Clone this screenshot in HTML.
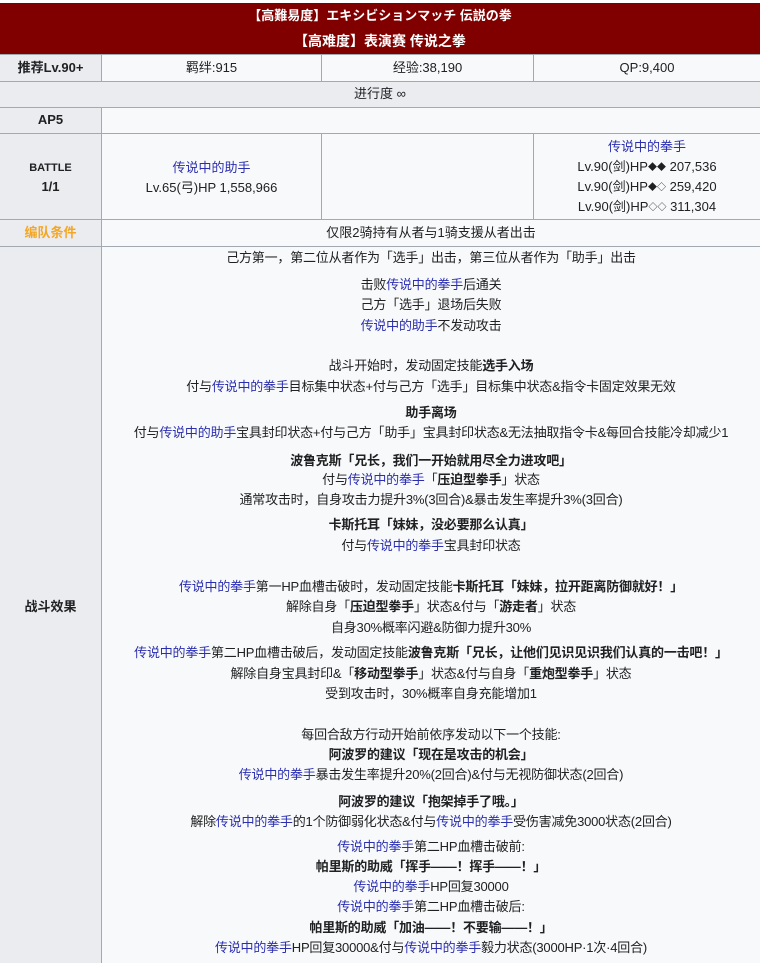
<!DOCTYPE html>
<html><head><meta charset="utf-8"><style>
*{margin:0;padding:0;box-sizing:border-box}
body{width:760px;height:963px;background:#fff;position:relative;overflow:hidden;font-family:"Liberation Sans","Noto Sans CJK SC",sans-serif;font-size:13px;color:#202122}
.bg{position:absolute}
.l{position:absolute;left:102px;width:658px;text-align:center;line-height:20px;height:20px;white-space:nowrap;letter-spacing:-0.2px}
.c{position:absolute;text-align:center;line-height:20px;white-space:nowrap}
b{font-weight:bold}
.u{color:#2b2fae}
.d{font-size:9px;vertical-align:1px}
.hl{position:absolute;background:#a2a9b1}
</style></head><body>
<div class="bg" style="left:0;top:3px;width:760px;height:51px;background:#800000"></div>
<div class="c" style="left:0;top:6px;width:760px;color:#fff;font-weight:bold;font-size:13px">【高難易度】エキシビションマッチ 伝説の拳</div>
<div class="c" style="left:0;top:31px;width:760px;color:#fff;font-weight:bold;font-size:14px">【高难度】表演赛 传说之拳</div>

<div class="bg" style="left:0;top:54px;width:101px;height:909px;background:#eaecf0"></div>
<div class="bg" style="left:102px;top:54px;width:658px;height:909px;background:#f8f9fa"></div>
<div class="bg" style="left:0;top:81px;width:760px;height:26px;background:#eaecf0"></div>

<div class="hl" style="left:0;top:54px;width:760px;height:1px"></div>
<div class="hl" style="left:0;top:81px;width:760px;height:1px"></div>
<div class="hl" style="left:0;top:107px;width:760px;height:1px"></div>
<div class="hl" style="left:0;top:133px;width:760px;height:1px"></div>
<div class="hl" style="left:0;top:219px;width:760px;height:1px"></div>
<div class="hl" style="left:0;top:246px;width:760px;height:1px"></div>
<div class="hl" style="left:101px;top:54px;width:1px;height:27px"></div>
<div class="hl" style="left:101px;top:107px;width:1px;height:856px"></div>
<div class="hl" style="left:321px;top:54px;width:1px;height:27px"></div>
<div class="hl" style="left:533px;top:54px;width:1px;height:27px"></div>
<div class="hl" style="left:321px;top:133px;width:1px;height:86px"></div>
<div class="hl" style="left:533px;top:133px;width:1px;height:86px"></div>

<div class="c" style="left:0;top:58px;width:101px;font-weight:bold">推荐Lv.90+</div>
<div class="c" style="left:102px;top:58px;width:219px">羁绊:915</div>
<div class="c" style="left:322px;top:58px;width:211px">经验:38,190</div>
<div class="c" style="left:534px;top:58px;width:226px">QP:9,400</div>
<div class="c" style="left:0;top:84px;width:760px">进行度 ∞</div>
<div class="c" style="left:0;top:110px;width:101px;font-weight:bold">AP5</div>
<div class="c" style="left:0;top:158px;width:101px;font-weight:bold;font-size:11px">BATTLE</div>
<div class="c" style="left:0;top:177px;width:101px;font-weight:bold">1/1</div>
<div class="c" style="left:102px;top:158px;width:219px"><span class="u">传说中的助手</span><br>Lv.65(弓)HP 1,558,966</div>
<div class="c" style="left:534px;top:137px;width:226px"><span class="u">传说中的拳手</span><br>Lv.90(剑)HP<span class="d">◆◆</span> 207,536<br>Lv.90(剑)HP<span class="d">◆◇</span> 259,420<br>Lv.90(剑)HP<span class="d">◇◇</span> 311,304</div>
<div class="c" style="left:0;top:223px;width:101px;font-weight:bold;color:#f5a623">编队条件</div>
<div class="c" style="left:102px;top:223px;width:658px">仅限2骑持有从者与1骑支援从者出击</div>
<div class="c" style="left:0;top:597px;width:101px;font-weight:bold">战斗效果</div>

<div class="l" style="top:248px">己方第一，第二位从者作为「选手」出击，第三位从者作为「助手」出击</div>
<div class="l" style="top:275px">击败<span class="u">传说中的拳手</span>后通关</div>
<div class="l" style="top:295px">己方「选手」退场后失败</div>
<div class="l" style="top:316px"><span class="u">传说中的助手</span>不发动攻击</div>
<div class="l" style="top:356px">战斗开始时，发动固定技能<b>选手入场</b></div>
<div class="l" style="top:377px">付与<span class="u">传说中的拳手</span>目标集中状态+付与己方「选手」目标集中状态&amp;指令卡固定效果无效</div>
<div class="l" style="top:403px"><b>助手离场</b></div>
<div class="l" style="top:423px">付与<span class="u">传说中的助手</span>宝具封印状态+付与己方「助手」宝具封印状态&amp;无法抽取指令卡&amp;每回合技能冷却减少1</div>
<div class="l" style="top:451px"><b>波鲁克斯「兄长，我们一开始就用尽全力进攻吧」</b></div>
<div class="l" style="top:470px">付与<span class="u">传说中的拳手</span>「<b>压迫型拳手</b>」状态</div>
<div class="l" style="top:490px">通常攻击时，自身攻击力提升3%(3回合)&amp;暴击发生率提升3%(3回合)</div>
<div class="l" style="top:515px"><b>卡斯托耳「妹妹，没必要那么认真」</b></div>
<div class="l" style="top:536px">付与<span class="u">传说中的拳手</span>宝具封印状态</div>
<div class="l" style="top:577px"><span class="u">传说中的拳手</span>第一HP血槽击破时，发动固定技能<b>卡斯托耳「妹妹，拉开距离防御就好！」</b></div>
<div class="l" style="top:597px">解除自身「<b>压迫型拳手</b>」状态&amp;付与「<b>游走者</b>」状态</div>
<div class="l" style="top:618px">自身30%概率闪避&amp;防御力提升30%</div>
<div class="l" style="top:643px"><span class="u">传说中的拳手</span>第二HP血槽击破后，发动固定技能<b>波鲁克斯「兄长，让他们见识见识我们认真的一击吧！」</b></div>
<div class="l" style="top:664px">解除自身宝具封印&amp;「<b>移动型拳手</b>」状态&amp;付与自身「<b>重炮型拳手</b>」状态</div>
<div class="l" style="top:684px">受到攻击时，30%概率自身充能增加1</div>
<div class="l" style="top:725px">每回合敌方行动开始前依序发动以下一个技能:</div>
<div class="l" style="top:745px"><b>阿波罗的建议「现在是攻击的机会」</b></div>
<div class="l" style="top:765px"><span class="u">传说中的拳手</span>暴击发生率提升20%(2回合)&amp;付与无视防御状态(2回合)</div>
<div class="l" style="top:792px"><b>阿波罗的建议「抱架掉手了哦。」</b></div>
<div class="l" style="top:812px">解除<span class="u">传说中的拳手</span>的1个防御弱化状态&amp;付与<span class="u">传说中的拳手</span>受伤害减免3000状态(2回合)</div>
<div class="l" style="top:837px"><span class="u">传说中的拳手</span>第二HP血槽击破前:</div>
<div class="l" style="top:857px"><b>帕里斯的助威「挥手——！挥手——！」</b></div>
<div class="l" style="top:877px"><span class="u">传说中的拳手</span>HP回复30000</div>
<div class="l" style="top:897px"><span class="u">传说中的拳手</span>第二HP血槽击破后:</div>
<div class="l" style="top:918px"><b>帕里斯的助威「加油——！不要输——！」</b></div>
<div class="l" style="top:938px"><span class="u">传说中的拳手</span>HP回复30000&amp;付与<span class="u">传说中的拳手</span>毅力状态(3000HP·1次·4回合)</div>
</body></html>
